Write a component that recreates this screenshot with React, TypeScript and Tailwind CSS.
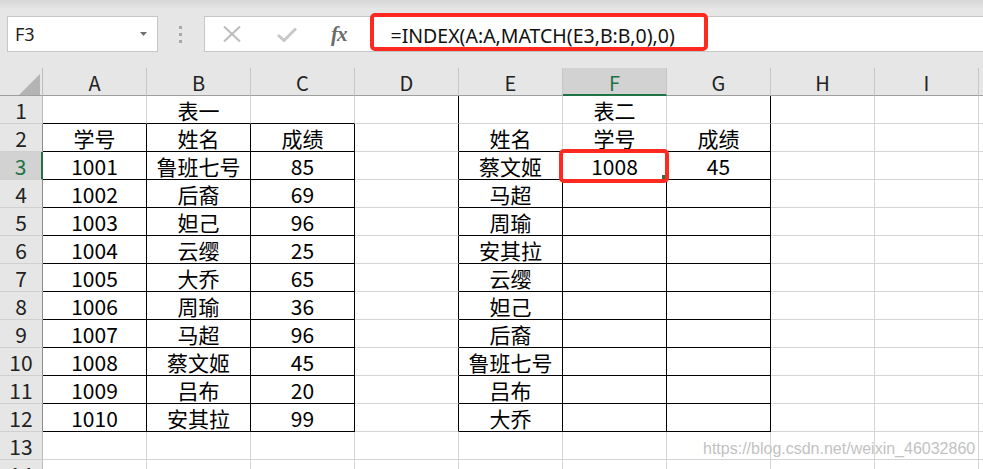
import { ReactNode } from "react";

const cols = ["A", "B", "C", "D", "E", "F", "G", "H", "I", ""];

// sheet contents by row (index 0 = row 1)
const table1 = [
  ["1001", "鲁班七号", "85"],
  ["1002", "后裔", "69"],
  ["1003", "妲己", "96"],
  ["1004", "云缨", "25"],
  ["1005", "大乔", "65"],
  ["1006", "周瑜", "36"],
  ["1007", "马超", "96"],
  ["1008", "蔡文姬", "45"],
  ["1009", "吕布", "20"],
  ["1010", "安其拉", "99"],
];

const names2 = ["蔡文姬", "马超", "周瑜", "安其拉", "云缨", "妲己", "后裔", "鲁班七号", "吕布", "大乔"];

function cellText(r: number, c: number): string {
  if (r === 1) {
    if (c === 1) return "表一";
    if (c === 5) return "表二";
    return "";
  }
  if (r === 2) {
    return ["学号", "姓名", "成绩", "", "姓名", "学号", "成绩"][c] ?? "";
  }
  if (r >= 3 && r <= 12) {
    if (c <= 2) return table1[r - 3][c];
    if (c === 4) return names2[r - 3];
    if (r === 3 && c === 5) return "1008";
    if (r === 3 && c === 6) return "45";
  }
  return "";
}

function rightBlack(r: number, c: number) {
  if (c <= 2 && r >= 2 && r <= 12) return true;
  if ((c === 3 || c === 6) && r >= 1 && r <= 12) return true;
  if ((c === 4 || c === 5) && r >= 3 && r <= 12) return true;
  return false;
}

function bottomBlack(r: number, c: number) {
  if (c <= 2 && r >= 1 && r <= 12) return true;
  if (c >= 4 && c <= 6 && r >= 2 && r <= 12) return true;
  return false;
}

function Cell({ r, c }: { r: number; c: number }) {
  const last = c === 9;
  return (
    <div
      className={`h-[28px] shrink-0 border-b text-center text-[21px] leading-[28px] text-black ${
        last ? "w-[104px]" : "w-[104px] border-r"
      } ${rightBlack(r, c) ? "border-r-black" : "border-r-[#d4d4d4]"} ${
        bottomBlack(r, c) ? "border-b-black" : "border-b-[#d4d4d4]"
      }`}
    >
      {cellText(r, c)}
    </div>
  );
}

function RowHeader({ r }: { r: number }) {
  const selected = r === 3;
  return (
    <div
      className={`h-[28px] w-[43px] shrink-0 border-b border-b-[#d0d0d0] text-center text-[21px] leading-[29px] ${
        selected
          ? "bg-[#d2d2d2] text-[#217346] border-r-2 border-r-[#217346]"
          : r >= 2 && r <= 12
          ? "bg-[#e6e6e6] text-[#222] border-r border-r-[#8c8c8c]"
          : "bg-[#e6e6e6] text-[#222] border-r border-r-[#bcbcbc]"
      }`}
    >
      {r}
    </div>
  );
}

function Toolbar() {
  return (
    <div className="h-[68px] flex items-start pt-[16px] pl-[7px] bg-[linear-gradient(#d6d6d6,#e6e6e6_9px)]">
      <div className="w-[151px] h-[36px] bg-white border border-[#c6c6c6] flex items-center justify-between pl-[7px] pr-[10px]">
        <span className="font-['Noto_Sans',sans-serif] text-[18px] text-[#222]">F3</span>
        <svg width="7" height="4" viewBox="0 0 7 4">
          <path d="M0 0h7L3.5 4z" fill="#707070" />
        </svg>
      </div>
      <div className="ml-[21px] mt-[10px] flex flex-col gap-[4px]">
        <span className="block w-[3px] h-[3px] bg-[#a8a8a8]" />
        <span className="block w-[3px] h-[3px] bg-[#a8a8a8]" />
        <span className="block w-[3px] h-[3px] bg-[#a8a8a8]" />
      </div>
      <div className="ml-[22px] flex-1 h-[36px] bg-white border border-r-0 border-[#c6c6c6] flex items-center">
        <svg className="ml-[18px]" width="18" height="16" viewBox="0 0 18 16">
          <path d="M1 0.5L17 15.5M17 0.5L1 15.5" stroke="#bcbcbc" strokeWidth="2" />
        </svg>
        <svg className="ml-[36px]" width="20" height="15" viewBox="0 0 20 15">
          <path d="M1 8L7 13.5L19 1.5" stroke="#c8c8c8" strokeWidth="3" fill="none" />
        </svg>
        <span className="ml-[34px] font-['Liberation_Serif',serif] italic text-[21px] leading-none text-[#6a6a6a] font-bold tracking-[-1px]">
          fx
        </span>
        <span className="ml-[44px] mt-[3px] text-[19.5px] text-[#111] font-['Noto_Sans',sans-serif]">
          =INDEX(A:A,MATCH(E3,B:B,0),0)
        </span>
      </div>
    </div>
  );
}

function HeaderRow() {
  return (
    <div className="flex h-[28px] bg-[#e6e6e6]">
      <div className="w-[43px] h-[28px] shrink-0 border-r border-b border-r-[#bcbcbc] border-b-[#9e9e9e] relative">
        <svg className="absolute left-[19px] top-[6px]" width="21" height="21" viewBox="0 0 21 21">
          <path d="M21 0V21H0z" fill="#b4b4b4" />
        </svg>
      </div>
      {cols.map((l, c) => (
        <div
          key={c}
          className={`w-[104px] h-[28px] shrink-0 text-center text-[20px] leading-[30px] ${
            c === 9 ? "" : "border-r border-r-[#c6c6c6]"
          } ${
            c === 5
              ? "bg-[#d2d2d2] text-[#217346] border-b-2 border-b-[#217346]"
              : "text-[#222] border-b border-b-[#9e9e9e]"
          }`}
        >
          {l}
        </div>
      ))}
    </div>
  );
}

function Overlay({ className, children }: { className: string; children?: ReactNode }) {
  return <div className={`absolute pointer-events-none ${className}`}>{children}</div>;
}

export default function App() {
  const rows = Array.from({ length: 14 }, (_, i) => i + 1);
  return (
    <div className="w-[983px] h-[469px] overflow-hidden bg-white relative font-['Noto_Sans_CJK_SC',sans-serif]">
      <Toolbar />
      <HeaderRow />
      {rows.map((r) => (
        <div key={r} className="flex">
          <RowHeader r={r} />
          {cols.map((_, c) => (
            <Cell key={c} r={r} c={c} />
          ))}
        </div>
      ))}

      {/* annotations */}
      <Overlay className="left-[370px] top-[13px] w-[338px] h-[38px] border-4 border-[#ff2a1f] rounded-[5px]" />
      <Overlay className="left-[662px] top-[175px] w-[4px] h-[4px] bg-[#217346]" />
      <Overlay className="left-[559px] top-[149px] w-[110px] h-[34px] border-4 border-[#ff2a1f] rounded-[5px]" />
      <Overlay className="left-[703px] top-[437px] font-['Liberation_Sans',sans-serif] text-[16px] text-[#c2c2c2] [text-shadow:0_0_2px_#fff]">
        https://blog.csdn.net/weixin_46032860
      </Overlay>
    </div>
  );
}
